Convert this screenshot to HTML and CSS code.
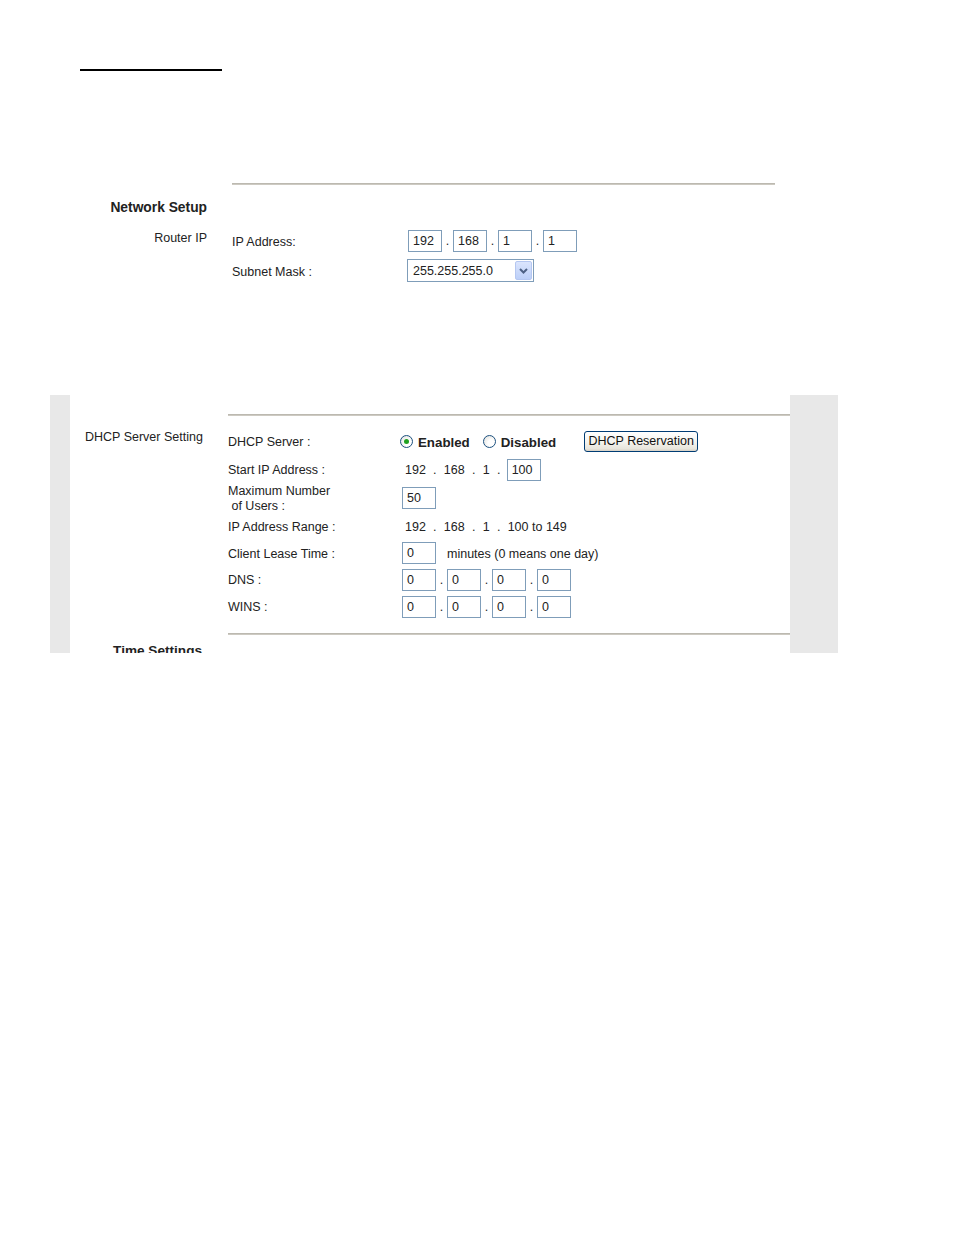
FILE: index.html
```html
<!DOCTYPE html>
<html>
<head>
<meta charset="utf-8">
<title>Network Setup</title>
<link rel="stylesheet" href="styles.css">
</head>
<body>
<div class="page">
  <div class="topline"></div>

  <section class="net">
    <div class="rule net-rule"></div>
    <div class="net-head">Network Setup</div>
    <div class="net-label">Router IP</div>
    <div class="net-fields">
      <div class="frow">
        <span class="flabel">IP Address:</span>
        <div class="ip ip-shift">
          <span class="box">192</span><span class="dot">.</span><span class="box">168</span><span class="dot">.</span><span class="box">1</span><span class="dot">.</span><span class="box">1</span>
        </div>
      </div>
      <div class="frow frow-sel">
        <span class="flabel">Subnet Mask :</span>
        <div class="select">
          <span class="sel-val">255.255.255.0</span>
          <span class="sel-btn"><svg width="9" height="6" viewBox="0 0 9 6"><path d="M1 1 L4.5 4.5 L8 1" fill="none" stroke="#4d6185" stroke-width="2"/></svg></span>
        </div>
      </div>
    </div>
  </section>

  <section class="panel">
    <div class="dhcp">
      <div class="rule dhcp-rule-top"></div>
      <div class="dhcp-label">DHCP Server Setting</div>
      <div class="fields">
        <div class="lbl">DHCP Server :</div>
        <div class="val val-radio">
          <span class="radio checked"><span class="radio-dot"></span></span>
          <span class="rlabel">Enabled</span>
          <span class="radio radio-2"></span>
          <span class="rlabel">Disabled</span>
          <span class="btn">DHCP Reservation</span>
        </div>

        <div class="lbl">Start IP Address :</div>
        <div class="val ip nums">
          <span>192</span><span class="sep">.</span><span>168</span><span class="sep">.</span><span>1</span><span class="sep">.</span><span class="box box-start">100</span>
        </div>

        <div class="lbl">Maximum Number<br>&nbsp;of Users :</div>
        <div class="val"><span class="box">50</span></div>

        <div class="lbl">IP Address Range :</div>
        <div class="val nums">
          <span>192</span><span class="sep">.</span><span>168</span><span class="sep">.</span><span>1</span><span class="sep">.</span><span>100 to 149</span>
        </div>

        <div class="lbl">Client Lease Time :</div>
        <div class="val"><span class="box">0</span><span class="note">minutes (0 means one day)</span></div>

        <div class="lbl">DNS :</div>
        <div class="val ip">
          <span class="box">0</span><span class="dot">.</span><span class="box">0</span><span class="dot">.</span><span class="box">0</span><span class="dot">.</span><span class="box">0</span>
        </div>

        <div class="lbl">WINS :</div>
        <div class="val ip">
          <span class="box">0</span><span class="dot">.</span><span class="box">0</span><span class="dot">.</span><span class="box">0</span><span class="dot">.</span><span class="box">0</span>
        </div>
      </div>
      <div class="rule dhcp-rule-bot"></div>
      <div class="time-head">Time Settings</div>
    </div>
  </section>
</div>
</body>
</html>
```

FILE: styles.css
```css
* { box-sizing: border-box; }

html, body {
  margin: 0;
  padding: 0;
  background: #fff;
}

body {
  font-family: "Liberation Sans", Arial, sans-serif;
  font-size: 12.5px;
  color: #222;
}

.page {
  width: 954px;
  min-height: 1235px;
  padding-top: 69px;
}

.topline {
  margin-left: 80px;
  width: 142px;
  height: 2px;
  background: #000;
}

.rule {
  height: 2px;
  background: #cdcac2;
  border-top: 1px solid #bcb9b0;
}

/* Network setup */
.net {
  display: grid;
  grid-template-columns: 207px 543px;
  column-gap: 25px;
  margin-top: 112px;
  align-items: start;
}

.net-rule { grid-column: 2; grid-row: 1; }

.net-head {
  grid-column: 1;
  grid-row: 2;
  text-align: right;
  font-weight: bold;
  font-size: 13.8px;
  line-height: 16px;
  margin-top: 15px;
}

.net-label {
  grid-column: 1;
  grid-row: 3;
  text-align: right;
  line-height: 15px;
  margin-top: 14.5px;
}

.net-fields {
  grid-column: 2;
  grid-row: 3;
  margin-top: 14px;
  display: flex;
  flex-direction: column;
  gap: 7px;
}

.frow {
  display: flex;
  align-items: center;
  height: 22px;
}

.frow-sel { height: 23px; }

.flabel {
  width: 176px;
  padding-top: 2px;
}

.ip {
  display: flex;
  align-items: baseline;
}

.box {
  display: inline-block;
  width: 34px;
  height: 22px;
  border: 1px solid #7f9db9;
  padding-left: 4px;
  padding-top: 1px;
  line-height: 18px;
  background: #fff;
  color: #222;
}

.dot {
  width: 11px;
  text-align: center;
}

.select {
  display: flex;
  align-items: center;
  width: 127px;
  height: 23px;
  margin-left: -1px;
  border: 1px solid #7f9db9;
  padding: 1px;
}

.sel-val {
  flex: 1;
  padding-left: 4px;
  padding-top: 1px;
}

.sel-btn {
  width: 17px;
  height: 19px;
  display: flex;
  align-items: center;
  justify-content: center;
  background: linear-gradient(#dbe5fd, #bccff8);
  border: 1px solid #b5c7f1;
  border-radius: 2px;
}

/* DHCP panel */
.panel {
  margin-top: 113px;
  margin-left: 50px;
  width: 788px;
  height: 258px;
  background: #e8e8e8;
  padding: 0 48px 0 20px;
  overflow: hidden;
}

.dhcp {
  background: #fff;
  height: 100%;
  display: grid;
  grid-template-columns: 158px 562px;
  align-content: start;
  align-items: start;
}

.dhcp-rule-top {
  grid-column: 2;
  grid-row: 1;
  margin-top: 19px;
}

.dhcp-label {
  grid-column: 1;
  grid-row: 2;
  padding-left: 15px;
  margin-top: 14px;
  line-height: 15px;
}

.fields {
  grid-column: 2;
  grid-row: 2;
  margin-top: 12px;
  display: grid;
  grid-template-columns: 174px 1fr;
  grid-template-rows: 27px 28px 29px 28px 26px 27px 27px;
  align-items: center;
}

.lbl {
  line-height: 15px;
  padding-top: 2px;
}

.val {
  display: flex;
  align-items: center;
}

.val.ip { align-items: baseline; }

.val-radio { margin-left: -2px; }

.radio {
  width: 13px;
  height: 13px;
  border-radius: 50%;
  border: 1px solid #1c5180;
  background: radial-gradient(circle at 65% 65%, #ffffff 30%, #dcdcd7 100%);
  display: flex;
  align-items: center;
  justify-content: center;
}

.radio-2 { margin-left: 13px; }

.radio-dot {
  width: 5px;
  height: 5px;
  border-radius: 50%;
  background: #21a121;
}

.rlabel {
  font-weight: bold;
  font-size: 13.3px;
  margin-left: 5px;
  padding-top: 1px;
}

.btn {
  margin-left: 28px;
  width: 114px;
  height: 21px;
  border: 1px solid #003c74;
  border-radius: 3px;
  background: linear-gradient(#ffffff 0%, #f5f4ef 50%, #e8e5dc 88%, #d6d0c5 100%);
  text-align: center;
  line-height: 19px;
  color: #111;
}

.nums {
  padding-left: 3px;
  padding-top: 2px;
}

.sep {
  width: 18px;
  text-align: center;
}

.box-start { margin-left: -1px; }

.note {
  margin-left: 11px;
  padding-top: 2px;
}

.dhcp-rule-bot {
  grid-column: 2;
  grid-row: 3;
  margin-top: 13px;
}

.time-head {
  grid-column: 1;
  grid-row: 4;
  text-align: right;
  padding-right: 26px;
  font-weight: bold;
  font-size: 13.6px;
  line-height: 16px;
  margin-top: 8px;
}
```
